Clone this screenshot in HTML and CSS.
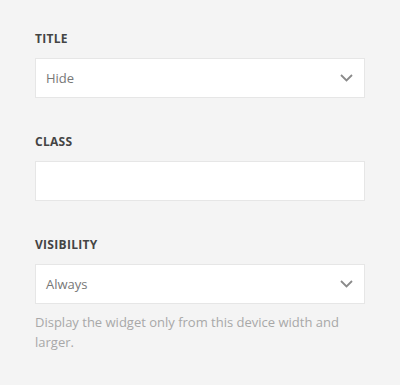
FILE: index.html
```html
<!DOCTYPE html>
<html lang="en">
<head>
<meta charset="UTF-8">
<meta name="viewport" content="width=device-width, initial-scale=1.0">
<title>Widget Settings</title>
<link rel="stylesheet" href="styles.css">
</head>
<body>
<div class="settings-panel">
    <div class="field">
        <label class="field-label">Title</label>
        <div class="select-box">
            <span class="select-value">Hide</span>
            <svg class="chevron" width="13" height="8" viewBox="0 0 13 8"><path d="M1 1l5.5 5.5L12 1" fill="none" stroke="#8a8a8a" stroke-width="1.8"/></svg>
        </div>
    </div>

    <div class="field">
        <label class="field-label">Class</label>
        <div class="text-box"></div>
    </div>

    <div class="field">
        <label class="field-label">Visibility</label>
        <div class="select-box">
            <span class="select-value">Always</span>
            <svg class="chevron" width="13" height="8" viewBox="0 0 13 8"><path d="M1 1l5.5 5.5L12 1" fill="none" stroke="#8a8a8a" stroke-width="1.8"/></svg>
        </div>
        <p class="field-help">Display the widget only from this device width and larger.</p>
    </div>
</div>
</body>
</html>
```

FILE: styles.css
```css
body {
    margin: 0;
    padding: 0;
    background: #f4f4f4;
    font-family: "Open Sans", "Noto Sans", sans-serif;
}

.settings-panel {
    padding: 31px 35px 0 35px;
    width: 330px;
}

.field {
    margin-bottom: 36px;
}

.field-label {
    display: block;
    font-size: 12px;
    line-height: 16px;
    font-weight: 700;
    letter-spacing: 0.3px;
    text-transform: uppercase;
    color: #444;
    margin-bottom: 11px;
}

.select-box,
.text-box {
    box-sizing: border-box;
    height: 40px;
    background: #fff;
    border: 1px solid #e6e6e6;
}

.select-box {
    display: flex;
    align-items: center;
    justify-content: space-between;
    padding: 0 11px 0 10px;
}

.select-value {
    font-size: 13px;
    color: #777;
}

.field-help {
    margin: 8px 0 0 0;
    font-size: 13px;
    line-height: 20px;
    color: #a8a8a8;
}
```
